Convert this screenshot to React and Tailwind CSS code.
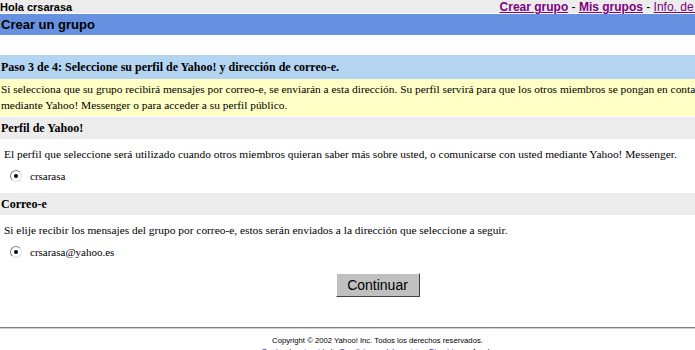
import React from "react";

const serif = "font-['Liberation_Serif','Times_New_Roman',serif]";
const sans = "font-['Liberation_Sans',Arial,sans-serif]";

function Radio() {
    return (
        <span className="inline-flex h-[12px] w-[12px] items-center justify-center rounded-full border border-t-[#808080] border-l-[#808080] border-b-[#e0e0e0] border-r-[#e0e0e0] bg-white">
            <span className="h-[4px] w-[4px] rounded-full bg-black" />
        </span>
    );
}

function SectionBar({ children }) {
    return (
        <div className={`h-[22px] bg-[#ececec] flex items-center px-[1px] text-[12px] font-bold text-black ${serif}`}>
            {children}
        </div>
    );
}

export default function App() {
    return (
        <div className="w-[695px] h-[350px] overflow-hidden bg-white">
            <div className="w-[755px]">
                {/* top bar */}
                <div className={`h-[13px] bg-[#ececec] flex items-end justify-between leading-[14px] ${sans}`}>
                    <div className="font-bold text-[11px] text-black -mb-[1px]">Hola crsarasa</div>
                    <div className="pr-[22px] text-[12px] text-[#800080] -mb-[1px]">
                        <a className="font-bold underline">Crear grupo</a>
                        <span className="text-black"> - </span>
                        <a className="font-bold underline">Mis grupos</a>
                        <span className="text-black"> - </span>
                        <a className="underline">Info. de cuenta</a>
                    </div>
                </div>
                <div className="h-[1px] bg-white" />
                {/* title bar */}
                <div className={`h-[21px] bg-[#6591e0] flex items-center px-[1px] text-[13px] font-bold text-black ${sans}`}>
                    Crear un grupo
                </div>
                <div className="h-[20px]" />
                {/* step */}
                <div className={`h-[24px] bg-[#b3d5f1] flex items-center px-[1px] text-[12px] font-bold text-black ${serif}`}>
                    Paso 3 de 4: Seleccione su perfil de Yahoo! y dirección de correo-e.
                </div>
                <div className={`bg-[#ffffc6] px-[1px] pt-[2px] pb-[3px] text-[11.4px] leading-[16px] text-black ${serif}`}>
                    <div className="whitespace-nowrap">Si selecciona que su grupo recibirá mensajes por correo-e, se enviarán a esta dirección. Su perfil servirá para que los otros miembros se pongan en contacto con usted</div>
                    <div className="whitespace-nowrap">mediante Yahoo! Messenger o para acceder a su perfil público.</div>
                </div>
                <div className="h-[1px]" />
                <SectionBar>Perfil de Yahoo!</SectionBar>
                <div className={`px-[4px] text-[11.4px] leading-[16px] text-black ${serif}`}>
                    <div className="pt-[7px] whitespace-nowrap">El perfil que seleccione será utilizado cuando otros miembros quieran saber más sobre usted, o comunicarse con usted mediante Yahoo! Messenger.</div>
                    <div className="flex items-center gap-[8px] pl-[6px] mt-[4px] h-[20px] text-[11px]">
                        <Radio />
                        <span>crsarasa</span>
                    </div>
                </div>
                <div className="h-[7px]" />
                <SectionBar>Correo-e</SectionBar>
                <div className={`px-[4px] text-[11.4px] leading-[16px] text-black ${serif}`}>
                    <div className="pt-[7px] whitespace-nowrap">Si elije recibir los mensajes del grupo por correo-e, estos serán enviados a la dirección que seleccione a seguir.</div>
                    <div className="flex items-center gap-[8px] pl-[6px] mt-[4px] h-[20px] text-[11px]">
                        <Radio />
                        <span>crsarasa@yahoo.es</span>
                    </div>
                </div>
                {/* button */}
                <div className="flex justify-center pt-[11px]">
                    <button className={`h-[24px] w-[84px] bg-[#c0c0c0] border border-t-white border-l-white border-b-[#404040] border-r-[#404040] text-[14px] text-black ${sans}`}>
                        Continuar
                    </button>
                </div>
                <div className="h-[30px]" />
                <div className="h-[2px] border-t border-[#808080] border-b border-b-[#d0d0d0]" />
                <div className={`pt-[6px] text-center text-[7.7px] leading-[11px] ${sans}`}>
                    <div className="text-black">Copyright © 2002 Yahoo! Inc. Todos los derechos reservados.</div>
                    <div className="text-[#0000cc] underline">Centro de privacidad - Condiciones del servicio - Directrices - Ayuda</div>
                </div>
            </div>
        </div>
    );
}
